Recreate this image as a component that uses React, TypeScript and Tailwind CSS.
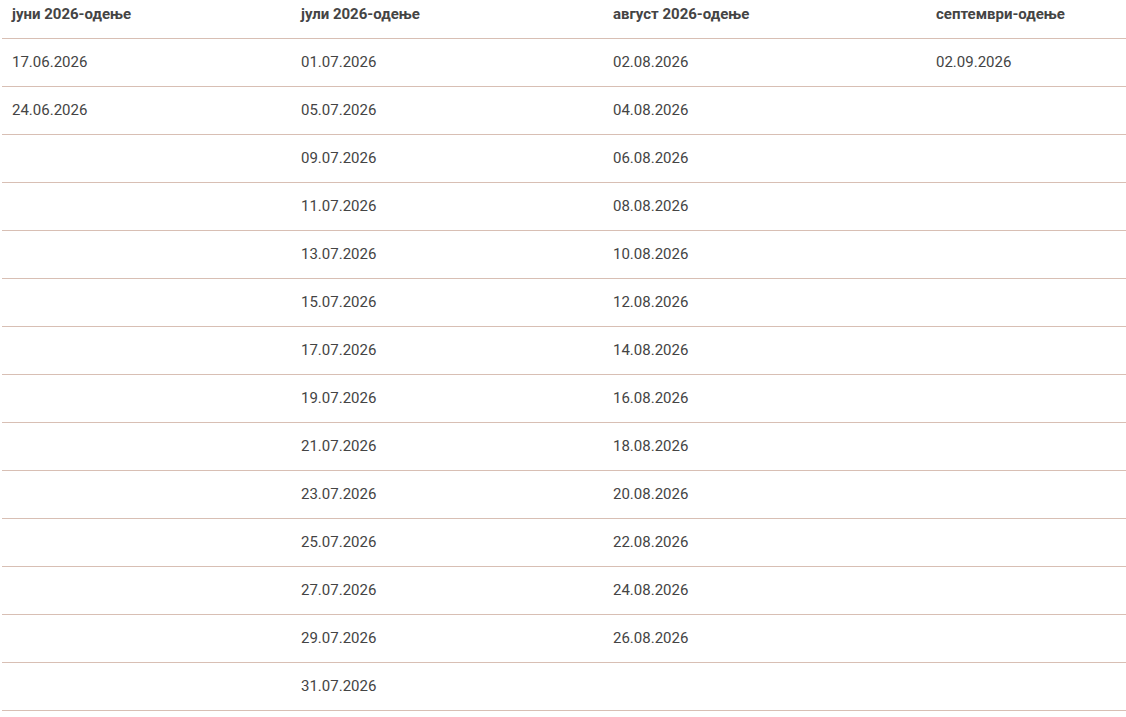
import React from 'react';

const headers = ['јуни 2026-одење', 'јули 2026-одење', 'август 2026-одење', 'септември-одење'];

const june = ['17.06.2026', '24.06.2026'];
const july = ['01.07.2026', '05.07.2026', '09.07.2026', '11.07.2026', '13.07.2026', '15.07.2026', '17.07.2026', '19.07.2026', '21.07.2026', '23.07.2026', '25.07.2026', '27.07.2026', '29.07.2026', '31.07.2026'];
const august = ['02.08.2026', '04.08.2026', '06.08.2026', '08.08.2026', '10.08.2026', '12.08.2026', '14.08.2026', '16.08.2026', '18.08.2026', '20.08.2026', '22.08.2026', '24.08.2026', '26.08.2026'];
const september = ['02.09.2026'];

export default function App() {
  const rows = Array.from({ length: july.length }, (_, i) => [june[i], july[i], august[i], september[i]]);

  return (
    <div className="bg-white min-h-screen pl-[2px] font-['Roboto',sans-serif] text-[15px] text-[#444]">
      <table className="w-[1124px] border-collapse table-fixed">
        <colgroup>
          <col className="w-[289px]" />
          <col className="w-[312px]" />
          <col className="w-[323px]" />
          <col />
        </colgroup>
        <thead>
          <tr className="border-b border-[#d8bfb4]">
            {headers.map((h) => (
              <th key={h} className="h-[38px] px-[10px] pb-[10px] text-left align-top pt-[4px] font-bold leading-5">
                {h}
              </th>
            ))}
          </tr>
        </thead>
        <tbody>
          {rows.map((r, i) => (
            <tr key={i} className="border-b border-[#d8bfb4]">
              {r.map((c, j) => (
                <td key={j} className="h-[48px] px-[10px] leading-5 align-middle">
                  {c ?? ''}
                </td>
              ))}
            </tr>
          ))}
        </tbody>
      </table>
    </div>
  );
}
